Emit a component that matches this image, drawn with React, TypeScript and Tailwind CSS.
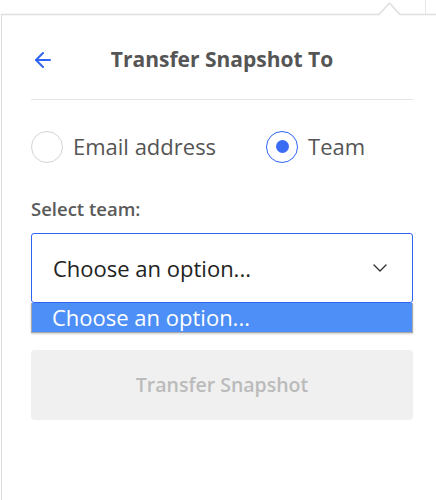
import { ArrowLeft, ChevronDown } from 'lucide-react'

export default function App() {
  return (
    <div className="relative h-[500px] w-[436px] overflow-hidden bg-white font-['Open_Sans',sans-serif]">
      {/* caret + top edge */}
      <svg className="absolute left-0 top-0" width="436" height="16" viewBox="0 0 436 16">
        <path d="M1.5 15 V14.5 H379 L389.5 3 L400 14.5 H436" fill="none" stroke="#dedede" strokeWidth="1.5" />
        <path d="M425.5 0 V14" stroke="#e6e6e6" strokeWidth="1" />
      </svg>

      <div className="absolute left-[1px] top-[14px] h-[486px] w-[440px] border-l-[1.5px] border-[#dedede]">
        <div className="w-[411px] pl-[29px] pt-[29px]">
          {/* Header */}
          <div className="flex h-[34px] items-center">
            <ArrowLeft className="h-[24px] w-[24px] text-[#2f64f5]" strokeWidth={2} />
            <div className="flex-1 pr-[24px] text-center text-[21px] font-bold text-[#555555]">
              Transfer Snapshot To
            </div>
          </div>
          <div className="mt-[22px] h-px bg-[#e4e4e4]" />

          {/* Radios */}
          <div className="mt-[30px] flex items-center">
            <div className="flex items-center">
              <span className="h-[32px] w-[32px] rounded-full border-[1.5px] border-[#d4d4d4]" />
              <span className="ml-[10px] text-[22px] text-[#555555]">Email address</span>
            </div>
            <div className="ml-[50px] flex items-center">
              <span className="flex h-[32px] w-[32px] items-center justify-center rounded-full border-[1.5px] border-[#2f64f5]">
                <span className="h-[13px] w-[13px] rounded-full bg-[#3a6cf4]" />
              </span>
              <span className="ml-[10px] text-[22px] text-[#555555]">Team</span>
            </div>
          </div>

          <div className="mt-[35px] text-[18.5px] font-semibold leading-[22px] text-[#5a5a5a]">Select team:</div>

          {/* Select */}
          <div className="mt-[13px] flex h-[70px] items-center justify-between rounded-[3px] border border-[#2f64f5] pl-[21px] pr-[20px]">
            <span className="text-[22px] text-[#222222]">Choose an option...</span>
            <ChevronDown className="h-[24px] w-[24px] text-[#333333]" strokeWidth={1.4} />
          </div>
          <div className="h-[30px] border border-[#a9a9a9] border-t-0 bg-[#4d8ff7] pl-[20px] text-[22px] leading-[28px] text-white shadow-[0_1px_2px_rgba(0,0,0,0.2)]">
            Choose an option...
          </div>

          {/* Button */}
          <div className="mt-[17px] flex h-[70px] items-center justify-center rounded-[4px] bg-[#f0f0f0] text-[19.5px] font-semibold text-[#bbbbbb]">
            Transfer Snapshot
          </div>
        </div>
      </div>
    </div>
  )
}
